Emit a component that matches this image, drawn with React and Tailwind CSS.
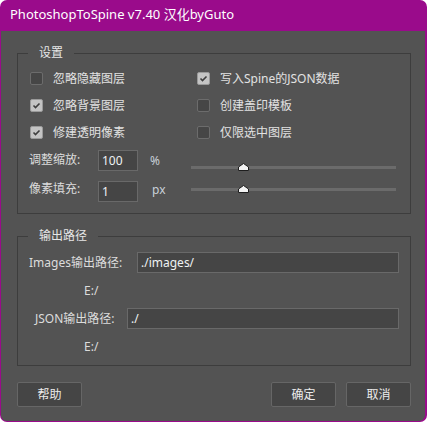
import React from "react";

const FONT = { fontFamily: '"Noto Sans", "Noto Sans CJK SC", sans-serif' };

function Check({ checked, label }) {
  return (
    <div className="flex items-center h-[27px]">
      <div
        className={
          "w-[13px] h-[13px] rounded-[2px] border flex items-center justify-center " +
          (checked ? "bg-[#c4c4c4] border-[#9a9a9a]" : "bg-[#464646] border-[#6c6c6c]")
        }
      >
        {checked && (
          <svg width="9" height="9" viewBox="0 0 9 9">
            <path d="M1.5 4.5 L3.5 6.5 L7.5 2.5" fill="none" stroke="#3e3e3e" strokeWidth="1.6" />
          </svg>
        )}
      </div>
      <span className="ml-[10px] text-[12px] leading-none text-[#e2e2e2]">{label}</span>
    </div>
  );
}

function Slider() {
  return (
    <div className="relative h-[8px] w-[205px] flex items-center">
      <div className="w-full h-[3px] bg-[#6b6b6b]" />
      <svg className="absolute left-[47px] top-0" width="11" height="8" viewBox="0 0 11 8">
        <path d="M0.5 7.5 V4 L5.5 0.5 L10.5 4 V7.5 Z" fill="#f4f4f4" stroke="#1e1e1e" strokeWidth="1" />
      </svg>
    </div>
  );
}

function Input({ value, className = "" }) {
  return (
    <div
      className={
        "h-[21px] bg-[#454545] border border-[#696969] flex items-center pl-[3px] text-[12px] text-[#eef2f4] " +
        className
      }
    >
      {value}
    </div>
  );
}

function Button({ children }) {
  return (
    <div className="w-[65px] h-[25px] bg-[#454545] border border-[#666666] rounded-[2px] flex items-center justify-center text-[12px] text-[#ececec]">
      {children}
    </div>
  );
}

export default function App() {
  return (
    <div style={FONT} className="w-[427px] h-[422px] bg-white">
      <div className="w-[427px] h-[422px] bg-[#9a0b8b] rounded-[7px] flex flex-col overflow-hidden pl-[1px] pr-[2px] pb-[1px]">
        <div className="h-[31px] shrink-0 flex items-center pl-[9px] pb-[1px] text-[13px] text-white">
          PhotoshopToSpine v7.40 汉化byGuto
        </div>
        <div className="flex-1 bg-[#535353] rounded-b-[6px] pl-[16px] pr-[14px] pt-[15px] flex flex-col">
          <fieldset className="border border-[#3d3d3d] h-[168px] pb-[0px]">
            <legend className="ml-[10px] px-[11px] text-[12px] leading-[14px] text-[#e6e6e6]">设置</legend>
            <div className="flex mt-[5px]">
              <div className="ml-[12px] w-[167px] flex flex-col">
                <Check label="忽略隐藏图层" />
                <Check checked label="忽略背景图层" />
                <Check checked label="修建透明像素" />
              </div>
              <div className="flex flex-col">
                <Check checked label="写入Spine的JSON数据" />
                <Check label="创建盖印模板" />
                <Check label="仅限选中图层" />
              </div>
            </div>
            <div className="flex mt-[4px]">
              <div className="flex flex-col ml-[11px] w-[149px]">
                <div className="flex items-center h-[21px]">
                  <span className="w-[69px] text-[12px] text-[#dcdcdc] pb-[1px]">调整缩放:</span>
                  <Input value="100" className="w-[40px]" />
                  <span className="ml-[12px] text-[12px] text-[#c8d0d8]">%</span>
                </div>
                <div className="flex items-center h-[21px] mt-[10px]">
                  <span className="w-[69px] text-[12px] text-[#dcdcdc] pb-[5px]">像素填充:</span>
                  <Input value="1" className="w-[40px]" />
                  <span className="ml-[14px] text-[12px] text-[#c8d0d8] pb-[4px]">px</span>
                </div>
              </div>
              <div className="flex flex-col ml-[13px] pt-[13px] gap-[14px]">
                <Slider />
                <Slider />
              </div>
            </div>
          </fieldset>
          <fieldset className="border border-[#3d3d3d] mt-[15px] h-[137px]">
            <legend className="ml-[10px] px-[11px] text-[12px] leading-[14px] text-[#e6e6e6]">输出路径</legend>
            <div className="flex items-center mt-[9px] pl-[11px] pr-[11px]">
              <span className="w-[108px] text-[12px] text-[#dcdcdc]">Images输出路径:</span>
              <Input value="./images/" className="flex-1" />
            </div>
            <div className="h-[35px] flex items-center pl-[66px] text-[12px] text-[#dcdcdc]">E:/</div>
            <div className="flex items-center pl-[17px] pr-[11px]">
              <span className="w-[92px] text-[12px] text-[#dcdcdc]">JSON输出路径:</span>
              <Input value="./" className="flex-1" />
            </div>
            <div className="h-[35px] flex items-center pl-[66px] text-[12px] text-[#dcdcdc]">E:/</div>
          </fieldset>
          <div className="flex mt-[16px]">
            <Button>帮助</Button>
            <div className="flex-1" />
            <Button>确定</Button>
            <div className="w-[10px]" />
            <Button>取消</Button>
          </div>
        </div>
      </div>
    </div>
  );
}
